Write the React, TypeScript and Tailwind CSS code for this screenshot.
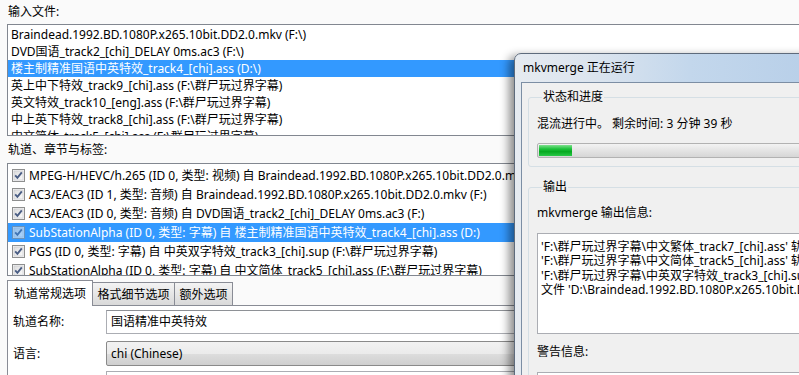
import React from 'react';

const inputFiles = [
  'Braindead.1992.BD.1080P.x265.10bit.DD2.0.mkv (F:\\)',
  'DVD国语_track2_[chi]_DELAY 0ms.ac3 (F:\\)',
  '楼主制精准国语中英特效_track4_[chi].ass (D:\\)',
  '英上中下特效_track9_[chi].ass (F:\\群尸玩过界字幕)',
  '英文特效_track10_[eng].ass (F:\\群尸玩过界字幕)',
  '中上英下特效_track8_[chi].ass (F:\\群尸玩过界字幕)',
  '中文简体_track5_[chi].ass (F:\\群尸玩过界字幕)',
];

const tracks = [
  'MPEG-H/HEVC/h.265 (ID 0, 类型: 视频) 自 Braindead.1992.BD.1080P.x265.10bit.DD2.0.mkv (F:)',
  'AC3/EAC3 (ID 1, 类型: 音频) 自 Braindead.1992.BD.1080P.x265.10bit.DD2.0.mkv (F:)',
  'AC3/EAC3 (ID 0, 类型: 音频) 自 DVD国语_track2_[chi]_DELAY 0ms.ac3 (F:)',
  'SubStationAlpha (ID 0, 类型: 字幕) 自 楼主制精准国语中英特效_track4_[chi].ass (D:)',
  'PGS (ID 0, 类型: 字幕) 自 中英双字特效_track3_[chi].sup (F:\\群尸玩过界字幕)',
  'SubStationAlpha (ID 0, 类型: 字幕) 自 中文简体_track5_[chi].ass (F:\\群尸玩过界字幕)',
];

const outputLines = [
  "'F:\\群尸玩过界字幕\\中文繁体_track7_[chi].ass' 轨道 0 已被添加",
  "'F:\\群尸玩过界字幕\\中文简体_track5_[chi].ass' 轨道 0 已被添加",
  "'F:\\群尸玩过界字幕\\中英双字特效_track3_[chi].sup' 轨道 0",
  "文件 'D:\\Braindead.1992.BD.1080P.x265.10bit.DD2.0.mkv' 已被写入",
];

// windows 7 style checkbox
const CheckBox: React.FC<{ faded?: boolean }> = ({ faded }) => (
  <svg width="13" height="13" viewBox="0 0 13 13" className={faded ? 'opacity-60' : ''}>
    <defs>
      <linearGradient id="cbg" x1="0" y1="0" x2="1" y2="1">
        <stop offset="0" stopColor="#dcdcdc" />
        <stop offset="1" stopColor="#fbfbfb" />
      </linearGradient>
    </defs>
    <rect x="0.5" y="0.5" width="12" height="12" fill="#f4f4f4" stroke="#8e8f8f" />
    <rect x="2" y="2" width="9" height="9" fill="url(#cbg)" stroke="#c5c7cb" strokeWidth="0.6" />
    <path d="M3.2 6.4 L5.4 8.8 L9.8 3.4" fill="none" stroke="#4a5d84" strokeWidth="1.9" />
  </svg>
);

export default function App() {
  return (
    <div className="relative w-[799px] h-[375px] overflow-hidden bg-[#fafafa] text-[12px] text-black font-['Noto_Sans','Noto_Sans_CJK_SC',sans-serif]">
      {/* main window */}
      <div className="flex flex-col pl-[7px] w-[900px]">
        <div className="h-[24px] flex items-center pl-[1px] pb-[1px]">输入文件:</div>
        <div className="h-[112px] overflow-hidden border border-[#828790] bg-white pt-[1px]">
          {inputFiles.map((f, i) => (
            <div
              key={f}
              className={`h-[17px] leading-[17px] pl-[3px] whitespace-nowrap ${i === 2 ? 'bg-[#3399ff] text-white' : ''}`}
            >
              {f}
            </div>
          ))}
        </div>

        <div className="h-[27px] flex items-center pl-[1px]">轨道、章节与标签:</div>
        <div className="h-[113px] overflow-hidden border border-[#828790] bg-white pt-[2px]">
          {tracks.map((t, i) => (
            <div
              key={t}
              className={`h-[19px] flex items-center gap-[4px] pl-[4px] whitespace-nowrap ${i === 3 ? 'bg-[#3399ff] text-white' : ''}`}
            >
              <CheckBox faded={i === 3} />
              <span>{t}</span>
            </div>
          ))}
        </div>

        {/* tabs */}
        <div className="flex items-end h-[25px] mt-[4px]">
          <div className="relative z-10 -mb-px h-[26px] w-[86px] border border-b-0 border-[#898c95] bg-white flex items-center justify-center">
            轨道常规选项
          </div>
          <div className="h-[23px] w-[82px] border border-l-0 border-b-0 border-[#898c95] bg-gradient-to-b from-[#f3f3f3] to-[#d9d9d9] flex items-center justify-center pt-[1px]">
            格式细节选项
          </div>
          <div className="h-[23px] w-[58px] border border-l-0 border-b-0 border-[#898c95] bg-gradient-to-b from-[#f3f3f3] to-[#d9d9d9] flex items-center justify-center pt-[1px]">
            额外选项
          </div>
        </div>
        <div className="border border-[#898c95] bg-white h-[80px] pt-[4px] pl-[5px]">
          <div className="flex items-center">
            <div className="w-[93px]">轨道名称:</div>
            <div className="h-[24px] flex-1 border border-[#abadb3] border-t-[#8e9196] bg-white flex items-center pl-[4px]">
              国语精准中英特效
            </div>
          </div>
          <div className="flex items-center mt-[7px]">
            <div className="w-[93px]">语言:</div>
            <div className="h-[25px] flex-1 rounded-[2px] border border-[#8a8a8a] bg-[linear-gradient(180deg,#f2f2f2_0%,#ebebeb_50%,#dddddd_51%,#cfcfcf_100%)] flex items-center pl-[4px]">
              chi (Chinese)
            </div>
          </div>
          <div className="h-[24px] mt-[5px] mr-0 ml-[93px] border border-[#abadb3] bg-white" />
        </div>
      </div>

      {/* mkvmerge progress dialog */}
      <div className="absolute left-[514px] top-[53px] w-[320px] h-[340px] rounded-tl-[7px] border border-[#5e6b7c] bg-[linear-gradient(90deg,#e6ebf1_0%,#dbe4ee_25%,#c3d7ec_55%,#b6cee8_100%)] shadow-[-5px_3px_10px_rgba(0,0,0,0.45)] flex flex-col">
        <div className="h-[28px] flex items-center pl-[8px] shrink-0">mkvmerge 正在运行</div>
        <div className="ml-[6px] flex-1 border-l border-t border-[#7c8ea4] bg-[#f0f0f0] pt-[6px]">
          <fieldset className="ml-[6px] border border-[#d5dfe5] rounded-[3px] pl-[8px] pb-[8px]">
            <legend className="ml-[5px] px-[1px] leading-[16px]">状态和进度</legend>
            <div className="mt-[11px] leading-[16px] whitespace-nowrap">混流进行中。 剩余时间: 3 分钟 39 秒</div>
            <div className="mt-[11px] h-[15px] rounded-[2px] border border-[#b2b2b2] bg-[linear-gradient(180deg,#f3f3f3_0%,#e4e4e4_50%,#d6d6d6_100%)] p-px">
              <div className="h-full w-[33px] bg-[linear-gradient(180deg,#7fe08e_0%,#1fc23c_35%,#06a920_60%,#28c846_100%)]" />
            </div>
          </fieldset>

          <fieldset className="ml-[6px] mt-[12px] border border-[#d5dfe5] rounded-[3px] pl-[8px] h-[220px]">
            <legend className="ml-[5px] px-[1px] leading-[16px]">输出</legend>
            <div className="mt-[10px] leading-[16px] whitespace-nowrap">mkvmerge 输出信息:</div>
            <div className="mt-[12px] h-[101px] border border-[#abadb3] bg-white pt-[6px] pl-[3px] overflow-hidden">
              {outputLines.map(l => (
                <div key={l} className="leading-[14.4px] whitespace-nowrap">{l}</div>
              ))}
            </div>
            <div className="mt-[10px] leading-[16px]">警告信息:</div>
            <div className="mt-[12px] h-[60px] border border-[#abadb3] bg-white" />
          </fieldset>
        </div>
      </div>
    </div>
  );
}
